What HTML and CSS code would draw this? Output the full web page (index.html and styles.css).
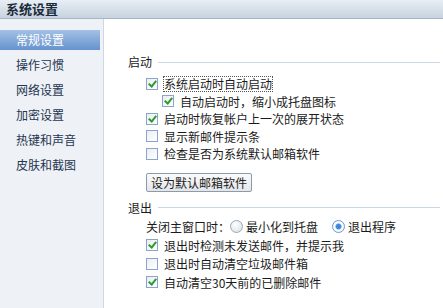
FILE: index.html
```html
<!DOCTYPE html>
<html lang="zh">
<head>
    <meta charset="UTF-8">
    <title>系统设置</title>
    <link rel="stylesheet" href="styles.css">
</head>
<body>
    <div class="window">
        <div class="title-bar">系统设置</div>
        <div class="window-body">
            <ul class="side-nav">
                <li class="nav-item active">常规设置</li>
                <li class="nav-item">操作习惯</li>
                <li class="nav-item">网络设置</li>
                <li class="nav-item">加密设置</li>
                <li class="nav-item">热键和声音</li>
                <li class="nav-item">皮肤和截图</li>
            </ul>

            <div class="content">
                <div class="group startup">
                    <div class="legend">启动</div>
                    <div class="row"><span class="check on"></span><span class="focus">系统启动时自动启动</span></div>
                    <div class="row sub"><span class="check on"></span>自动启动时，缩小成托盘图标</div>
                    <div class="row"><span class="check on"></span>启动时恢复帐户上一次的展开状态</div>
                    <div class="row"><span class="check"></span>显示新邮件提示条</div>
                    <div class="row"><span class="check"></span>检查是否为系统默认邮箱软件</div>
                    <button class="btn">设为默认邮箱软件</button>
                </div>

                <div class="group exit">
                    <div class="legend">退出</div>
                    <div class="row">
                        关闭主窗口时：
                        <span class="radio"></span><span class="radio-text">最小化到托盘</span>
                        <span class="radio on"></span><span>退出程序</span>
                    </div>
                    <div class="row"><span class="check on"></span>退出时检测未发送邮件，并提示我</div>
                    <div class="row"><span class="check"></span>退出时自动清空垃圾邮件箱</div>
                    <div class="row"><span class="check on"></span>自动清空30天前的已删除邮件</div>
                </div>
            </div>
        </div>
    </div>
</body>
</html>
```

FILE: styles.css
```css
body {
    margin: 0;
    font-family: "Noto Sans CJK SC", "Liberation Sans", sans-serif;
    font-size: 12px;
    color: #1a1a1a;
    background-color: #FFFFFF;
}
.window {
    width: 443px;
    height: 308px;
    display: flex;
    flex-direction: column;
    overflow: hidden;
}
.title-bar {
    height: 18px;
    line-height: 18px;
    padding-left: 6px;
    font-size: 13px;
    font-weight: bold;
    color: #1c2b3a;
    background: linear-gradient(#e8eef5, #c6d3e0);
    border-bottom: 1px solid #a7b7c8;
}
.window-body {
    flex: 1;
    display: flex;
}
.side-nav {
    list-style: none;
    margin: 0;
    padding: 11px 3px 0 0;
    width: 100px;
    background-color: #eef2f6;
    border-right: 1px solid #cdd8e4;
}
.nav-item {
    height: 20px;
    line-height: 20px;
    padding-left: 16px;
    margin-bottom: 5px;
    color: #1f3550;
}
.nav-item.active {
    color: #FFFFFF;
    background: linear-gradient(#a4c1e5, #6692cd);
}
.content {
    flex: 1;
    padding: 34px 0 0 24px;
}
.legend {
    height: 18px;
    line-height: 18px;
    display: flex;
    align-items: center;
    gap: 6px;
}
.legend::after {
    content: "";
    flex: 1;
    height: 1px;
    background-color: #c9d7e6;
    margin-right: 3px;
}
.row {
    height: 17.5px;
    display: flex;
    align-items: center;
    padding-left: 18px;
    white-space: nowrap;
}
.startup .legend {
    margin-bottom: 4px;
}
.row.sub {
    padding-left: 34px;
}
.check {
    width: 10px;
    height: 10px;
    border: 1px solid #8aa5c6;
    background: linear-gradient(135deg, #e9eef4, #ffffff);
    margin-right: 6px;
    position: relative;
    flex: none;
}
.check.on::after {
    content: "";
    position: absolute;
    left: 3px;
    top: 0px;
    width: 3px;
    height: 6px;
    border: solid #2f9a2f;
    border-width: 0 2px 2px 0;
    transform: rotate(40deg);
}
.focus {
    outline: 1px dotted #555555;
    line-height: 14px;
}
.btn {
    display: block;
    margin: 10px 0 0 18px;
    width: 106px;
    height: 19px;
    padding: 0;
    font: inherit;
    color: #222222;
    border: 1px solid #8e9aa8;
    border-radius: 2px;
    background: linear-gradient(#fbfbfb, #e3e6ea);
}
.exit {
    margin-top: 7px;
}
.exit .legend {
    margin-bottom: 1px;
}
.exit .row {
    height: 18.5px;
}
.radio {
    width: 11px;
    height: 11px;
    border: 1px solid #9aa9ba;
    border-radius: 50%;
    background: radial-gradient(circle at 40% 35%, #ffffff, #d5dbe2);
    margin: 0 3px 0 0;
    position: relative;
    flex: none;
}
.radio.on {
    border-color: #6b9bd1;
    background: radial-gradient(circle, #2f7fd6 0, #4a90dc 2.5px, #ffffff 3.5px, #dce6f1);
}
.radio-text {
    margin-right: 14px;
}
```
